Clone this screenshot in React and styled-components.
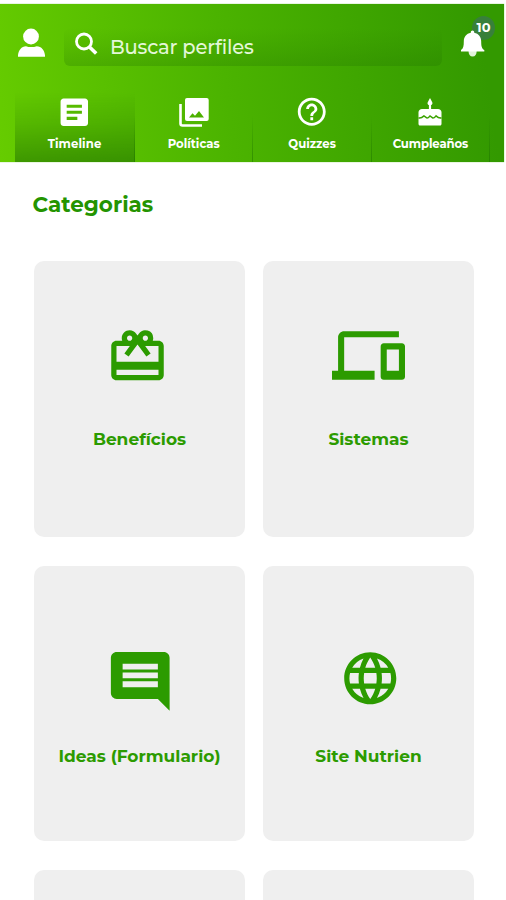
import styled, { createGlobalStyle } from "styled-components";
import {
    MdArticle,
    MdHelpOutline,
    MdRedeem,
    MdDevices,
    MdComment,
    MdLanguage,
} from "react-icons/md";

const GlobalStyle = createGlobalStyle`
* {
box-sizing: border-box;
}

body {
margin: 0;
background: #fff;
font-family: Montserrat, Inter, "Open Sans", sans-serif;
}
`

const Page = styled.div`
width: 100%;
height: 900px;
overflow: hidden;
padding-top: 4px;
`

const Header = styled.header`
width: 504px;
height: 158px;
display: flex;
flex-direction: column;
justify-content: space-between;
background: linear-gradient(82deg, #66cc00 0%, #4bb300 45%, #339900 95%);
box-shadow: 0 0 1px #7fc850;
`

const TopBar = styled.div`
display: flex;
height: 64px;
padding: 24px 19px 0 18px;
`

const SearchField = styled.div`
display: flex;
align-items: flex-start;
width: 378px;
height: 38px;
margin-left: 19px;
padding: 4px 0 0 11px;
border-radius: 6px;
background: linear-gradient(rgba(30, 110, 0, 0) 0%, rgba(30, 110, 0, 0.1) 45%, rgba(30, 110, 0, 0.25) 100%);
`

const SearchText = styled.span`
margin: 3px 0 0 12px;
color: #e4f7d8;
font-size: 19.5px;
font-weight: 500;
letter-spacing: -0.2px;
line-height: 24px;
white-space: nowrap;
`

const BellButton = styled.div`
position: relative;
width: 24px;
height: 28px;
margin: 2px 0 0 19px;
`

const Badge = styled.span`
position: absolute;
top: -14px;
left: 11px;
width: 23px;
height: 24px;
border-radius: 50%;
background: #38803a;
color: #fff;
font-size: 13px;
font-weight: 700;
line-height: 23px;
text-align: center;
`

const BellDrawing = styled.svg`
position: relative;
display: block;
`

const Tabs = styled.nav`
display: flex;
height: 70px;
padding-left: 15px;
`

const Tab = styled.div`
display: flex;
flex-direction: column;
align-items: center;
width: ${props => props.$active ? '120px' : '118.4px'};
color: #fff;
border-right: 1px solid;
border-image: linear-gradient(rgba(25, 110, 0, 0) 35%, rgba(25, 110, 0, 0.5)) 1;
background: ${props => props.$active ? 'linear-gradient(rgba(30, 110, 0, 0) 0%, rgba(30, 110, 0, 0.2) 45%, rgba(30, 110, 0, 0.55) 100%)' : 'none'};
`

const TabIcon = styled.span`
display: flex;
align-items: center;
justify-content: center;
height: 40px;
`

const TabLabel = styled.span`
margin-top: 5px;
font-size: 11.7px;
font-weight: 700;
line-height: 14px;
letter-spacing: ${props => props.$spacing}px;
margin-right: ${props => -props.$spacing}px;
`

const Title = styled.h1`
margin: 29px 0 0 32.5px;
color: #249400;
font-size: 21.5px;
font-weight: 700;
line-height: 26px;
`

const Grid = styled.main`
display: grid;
grid-template-columns: 211px 211px;
grid-auto-rows: 275.5px;
gap: 29px 18px;
padding: 44px 0 0 33.5px;
`

const Card = styled.div`
display: flex;
flex-direction: column;
align-items: center;
border-radius: 10px;
background: #efefef;
color: #2c9b00;
`

const CardIcon = styled.span`
display: flex;
align-items: flex-start;
height: 100px;
margin-top: ${props => props.$top}px;
margin-left: ${props => props.$shift}px;
`

const CardLabel = styled.span`
margin-top: ${props => props.$top}px;
padding-left: 1px;
font-size: 17px;
font-weight: 700;
line-height: 20px;
white-space: nowrap;
`

const PersonIcon = () => (
    <svg width="27" height="29" viewBox="0 0 27 29" fill="#fff">
        <circle cx="13" cy="8.5" r="7.9" />
        <path d="M0 28.7v-1.5C.5 22 3.5 18.5 8 18.2c3 1.2 7.500 1.200 10.700 0 4.800.3 7.800 3.800 8.300 9v1.500z" />
    </svg>
);

const SearchIcon = () => (
    <svg width="23" height="23" viewBox="0 0 23 23" fill="none" stroke="#fff">
        <circle cx="9" cy="9.500" r="7.500" strokeWidth="2.800" />
        <path d="M14.500 15l6.700 6.500" strokeWidth="3.600" />
    </svg>
);

const BellIcon = () => (
    <BellDrawing width="24" height="28" viewBox="0 0 24 28" fill="#fff">
        <path d="M7.500 20.500h8.200c0 4-1.500 6-4.100 6s-4.100-2-4.100-6z" fill="#e3f2dc" />
        <path d="M11.500.5c1 0 1.700.8 1.700 1.700v.6c4.500.9 7 4.300 7 8.600 0 4.400.4 7 3.100 8.600v1.500H0V20c2.400-1.600 2.800-4.200 2.800-8.600 0-4.300 2.500-7.700 7-8.600v-.6c0-.9.700-1.700 1.700-1.700z" />
    </BellDrawing>
);

const PhotosIcon = () => (
    <svg width="30" height="29" viewBox="0 0 30 29">
        <path d="M1.500 6v19.500c0 1.200.8 2 2 2H23" fill="none" stroke="currentColor" strokeWidth="2.600" />
        <rect x="6" width="23.700" height="23" rx="2" fill="currentColor" />
        <path d="M10 19.500l3.500-4.300 2.500 2.500 4-4.700 5 6.500z" fill="#4db100" />
    </svg>
);

const CakeIcon = () => (
    <svg width="24" height="28" viewBox="0 0 24 28" fill="currentColor">
        <path d="M12 0l2 3.700c1.200 2-.1 3.600-2 3.600s-3.200-1.600-2-3.600zM10.900 7h2.200v5h-2.200z" />
        <path d="M4 11h16c2 0 3.500 1.500 3.500 3.500V26c0 .8-.6 1.500-1.500 1.500H2c-.9 0-1.500-.7-1.500-1.500V14.500C.5 12.500 2 11 4 11z" />
        <path d="M.5 19.800c2.500.8 3.500-.1 5.500-1.900l2.700 2c1 .5 1.500 0 3.300-2l2.600 2c1 .5 1.600 0 3.400-2 2 1.800 3 2.700 5.500 1.900" fill="none" stroke="#3ba200" strokeWidth="1.500" />
    </svg>
);

const tabs = [
    { label: "Timeline", icon: <MdArticle size={36.6} />, spacing: 0.1, active: true },
    { label: "Políticas", icon: <PhotosIcon />, spacing: 0 },
    { label: "Quizzes", icon: <MdHelpOutline size={33.5} />, spacing: 0 },
    { label: "Cumpleaños", icon: <CakeIcon />, spacing: -0.1 },
];

const cards = [
    { label: "Benefícios", icon: MdRedeem, size: 63, top: 64, shift: -4, labelTop: 4 },
    { label: "Sistemas", icon: MdDevices, size: 73, top: 58, shift: 0, labelTop: 10 },
    { label: "Ideas (Formulario)", icon: MdComment, size: 70.5, top: 80.5, shift: 2, labelTop: 0 },
    { label: "Site Nutrien", icon: MdLanguage, size: 62.5, top: 81, shift: 5, labelTop: -0.5 },
    { label: "" },
    { label: "" },
];

export default function App() {
    return (
        <>
            <GlobalStyle />
            <Page>
                <Header>
                    <TopBar>
                        <PersonIcon />
                        <SearchField>
                            <SearchIcon />
                            <SearchText>Buscar perfiles</SearchText>
                        </SearchField>
                        <BellButton>
                            <Badge>10</Badge>
                            <BellIcon />
                        </BellButton>
                    </TopBar>
                    <Tabs>
                        {tabs.map(({ label, icon, spacing, active }) => (
                            <Tab key={label} $active={active}>
                                <TabIcon>{icon}</TabIcon>
                                <TabLabel $spacing={spacing}>{label}</TabLabel>
                            </Tab>
                        ))}
                    </Tabs>
                </Header>
                <Title>Categorias</Title>
                <Grid>
                    {cards.map(({ label, icon: Icon, size, top, shift, labelTop }, i) => (
                        <Card key={i}>
                            {Icon && <CardIcon $top={top} $shift={shift}><Icon size={size} /></CardIcon>}
                            {label && <CardLabel $top={labelTop}>{label}</CardLabel>}
                        </Card>
                    ))}
                </Grid>
            </Page>
        </>
    );
}
